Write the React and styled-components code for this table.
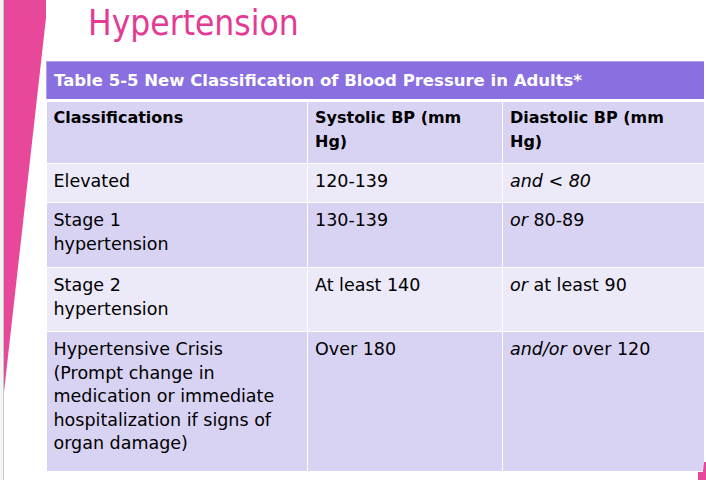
import React from 'react';
import styled, { createGlobalStyle } from 'styled-components';

const GlobalStyle = createGlobalStyle`
	html, body {
		margin: 0;
		padding: 0;
		background: #ffffff;
	}
	body {
		font-family: 'DejaVu Sans', sans-serif;
		color: #000000;
	}
`;

const Slide = styled.div`
	position: relative;
	display: flex;
	width: 706px;
	height: 480px;
	overflow: hidden;
	background: #ffffff;
`;

const Gutter = styled.div`
	flex: 0 0 46px;
	height: 100%;
`;

const Content = styled.div`
	flex: 1;
	display: flex;
	flex-direction: column;
	padding-right: 3px;
`;

const Title = styled.h1`
	margin: 0;
	height: 61px;
	padding-left: 42px;
	font-family: 'DejaVu Sans Condensed', 'DejaVu Sans', sans-serif;
	font-size: 35px;
	font-weight: normal;
	line-height: 46px;
	color: #e43a93;
`;

const Table = styled.table`
	width: 657px;
	border-collapse: collapse;
	table-layout: fixed;
`;

const CaptionCell = styled.th`
	height: 37px;
	padding: 0 7px;
	background: #8a6fe0;
	border-top: 1px solid #b3a2ee;
	border-left: 1px solid #b3a2ee;
	border-bottom: 3px solid #ffffff;
	color: #ffffff;
	font-size: 16.5px;
	font-weight: bold;
	text-align: left;
	vertical-align: middle;
`;

const Row = styled.tr`
	height: ${(p) => p.$height}px;
	background: ${(p) => (p.$light ? '#ece9f8' : '#d9d3f3')};
`;

const Cell = styled.td`
	padding: ${(p) => (p.$head ? '4px' : '6px')} 7px 0;
	border: 1.5px solid #ffffff;
	border-top: 0;
	font-size: ${(p) => (p.$head ? '16px' : '17.5px')};
	font-weight: ${(p) => (p.$head ? 'bold' : 'normal')};
	line-height: 23.5px;
	vertical-align: top;
	&:first-child {
		border-left: 0;
	}
	&:last-child {
		border-right: 0;
	}
`;

const Corner = styled.svg`
	position: absolute;
	right: 0;
	bottom: 0;
`;

const SideArt = () => (
	<svg width="46" height="480" viewBox="0 0 46 480">
		<rect x="0" y="0" width="3" height="480" fill="#f4f4f4" />
		<rect x="3" y="0" width="1" height="480" fill="#c8c8c8" />
		<polygon points="4,0 48,0 4,392" fill="#e8489a" />
	</svg>
);

const rows = [
	{ h: 39, light: true, c: ['Elevated', '120-139', <><em>and</em> &lt; <em>80</em></>] },
	{ h: 65, light: false, c: [<>Stage 1<br />hypertension</>, '130-139', <><em>or</em> 80-89</>] },
	{ h: 64, light: true, c: [<>Stage 2<br />hypertension</>, 'At least 140', <><em>or</em> at least 90</>] },
	{
		h: 140,
		light: false,
		c: [
			<>Hypertensive Crisis<br />(Prompt change in<br />medication or immediate<br />hospitalization if signs of<br />organ damage)</>,
			'Over 180',
			<><em>and/or</em> over 120</>,
		],
	},
];

export default function App() {
	return (
		<>
			<GlobalStyle />
			<Slide>
				<Gutter>
					<SideArt />
				</Gutter>
				<Content>
					<Title>Hypertension</Title>
					<Table>
						<colgroup>
							<col style={{ width: 261 }} />
							<col style={{ width: 195 }} />
							<col style={{ width: 201 }} />
						</colgroup>
						<thead>
							<tr>
								<CaptionCell colSpan={3}>
									Table 5-5 New Classification of Blood Pressure in Adults*
								</CaptionCell>
							</tr>
						</thead>
						<tbody>
							<Row $height={63}>
								<Cell $head>Classifications</Cell>
								<Cell $head>Systolic BP (mm<br />Hg)</Cell>
								<Cell $head>Diastolic BP (mm<br />Hg)</Cell>
							</Row>
							{rows.map((r, i) => (
								<Row key={i} $height={r.h} $light={r.light}>
									{r.c.map((v, j) => (
										<Cell key={j}>{v}</Cell>
									))}
								</Row>
							))}
						</tbody>
					</Table>
				</Content>
				<Corner width="8" height="18" viewBox="0 0 8 18">
					<polygon points="6,0 8,0 8,18 0,18 0,10 5,10" fill="#e8489a" />
				</Corner>
			</Slide>
		</>
	);
}
